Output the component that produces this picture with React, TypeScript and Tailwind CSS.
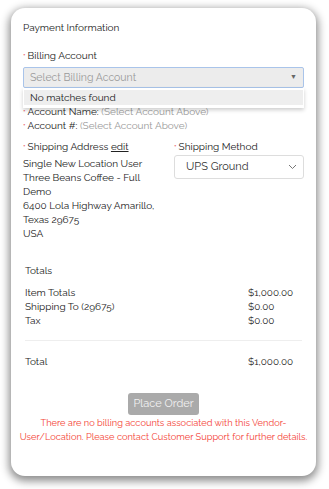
import React from "react";

const Req = () => <span className="text-[#e53935] text-[8px] align-top mr-[2px]">*</span>;

export default function App() {
  return (
    <div className="w-[329px] h-[489px] bg-white pt-[8px] pl-[11px] pr-[13px]" style={{ fontFamily: "Raleway, Lato, 'Open Sans', sans-serif" }}>
      <div className="relative w-[305px] h-[468px] bg-white rounded-[14px] shadow-[0_3px_8px_2px_rgba(0,0,0,0.45)] px-[12px] pt-[13px] text-[10px] text-[#222]">
        <div className="leading-[14px]">Payment Information</div>
        <div className="mt-[14px] leading-[14px]"><Req />Billing Account</div>
        <div className="relative mt-[4px]">
          <div className="h-[21px] bg-[#ececec] border border-[#a9c4ea] rounded-[2px] flex items-center justify-between px-[6px]">
            <span className="text-[#9a9a9a] text-[10.5px]">Select Billing Account</span>
            <span className="text-[#666] text-[7px]">▼</span>
          </div>
          <div className="absolute left-0 right-0 top-[21px] bg-white shadow-[0_2px_4px_rgba(0,0,0,0.2)] px-[1px] pt-[2px] pb-[3px] z-10">
            <div className="bg-[#eeeeee] h-[15px] flex items-center px-[6px] text-[10px] text-[#222]">No matches found</div>
          </div>
        </div>
        <div className="mt-[17px] leading-[14px]"><Req />Account Name: <span className="text-[#999]">(Select Account Above)</span></div>
        <div className="leading-[14px]"><Req />Account #: <span className="text-[#999]">(Select Account Above)</span></div>
        <div className="flex mt-[7px]">
          <div className="w-[151px]">
            <div className="leading-[14px]"><Req />Shipping Address <span className="underline">edit</span></div>
            <div className="mt-[3px] leading-[14px]">
              <div>Single New Location User</div>
              <div>Three Beans Coffee - Full</div>
              <div>Demo</div>
              <div>6400 Lola Highway Amarillo,</div>
              <div>Texas 29675</div>
              <div>USA</div>
            </div>
          </div>
          <div className="flex-1">
            <div className="leading-[14px]"><Req />Shipping Method</div>
            <div className="mt-[1px] h-[24px] border border-[#ddd] rounded-[3px] flex items-center justify-between pl-[11px] pr-[6px]">
              <span className="text-[11px] text-[#333]">UPS Ground</span>
              <svg width="9" height="6" viewBox="0 0 9 6" fill="none" stroke="#777" strokeWidth="1"><path d="M1 1l3.5 3.5L8 1" /></svg>
            </div>
          </div>
        </div>
        <div className="mt-[23px] px-[2px]">
          <div className="leading-[14px]">Totals</div>
          <div className="mt-[8px] leading-[14px]">
            <div className="flex"><span className="flex-1">Item Totals</span><span className="w-[54px]">$1,000.00</span></div>
            <div className="flex"><span className="flex-1">Shipping To (29675)</span><span className="w-[54px]">$0.00</span></div>
            <div className="flex"><span className="flex-1">Tax</span><span className="w-[54px]">$0.00</span></div>
          </div>
          <div className="mt-[12px] border-t border-[#eee]" />
          <div className="mt-[14px] flex leading-[14px]"><span className="flex-1">Total</span><span className="w-[54px]">$1,000.00</span></div>
        </div>
        <div className="mt-[24px] flex justify-center">
          <div className="w-[71px] h-[22px] bg-[#aaaaaa] rounded-[3px] text-[#f2f2f2] text-[11px] flex items-center justify-center">Place Order</div>
        </div>
        <div className="mt-[1px] flex flex-col items-center text-[#f44336] text-[9.25px] leading-[14px] whitespace-nowrap">
          <div>There are no billing accounts associated with this Vendor-</div>
          <div>User/Location. Please contact Customer Support for further details.</div>
        </div>
      </div>
    </div>
  );
}
